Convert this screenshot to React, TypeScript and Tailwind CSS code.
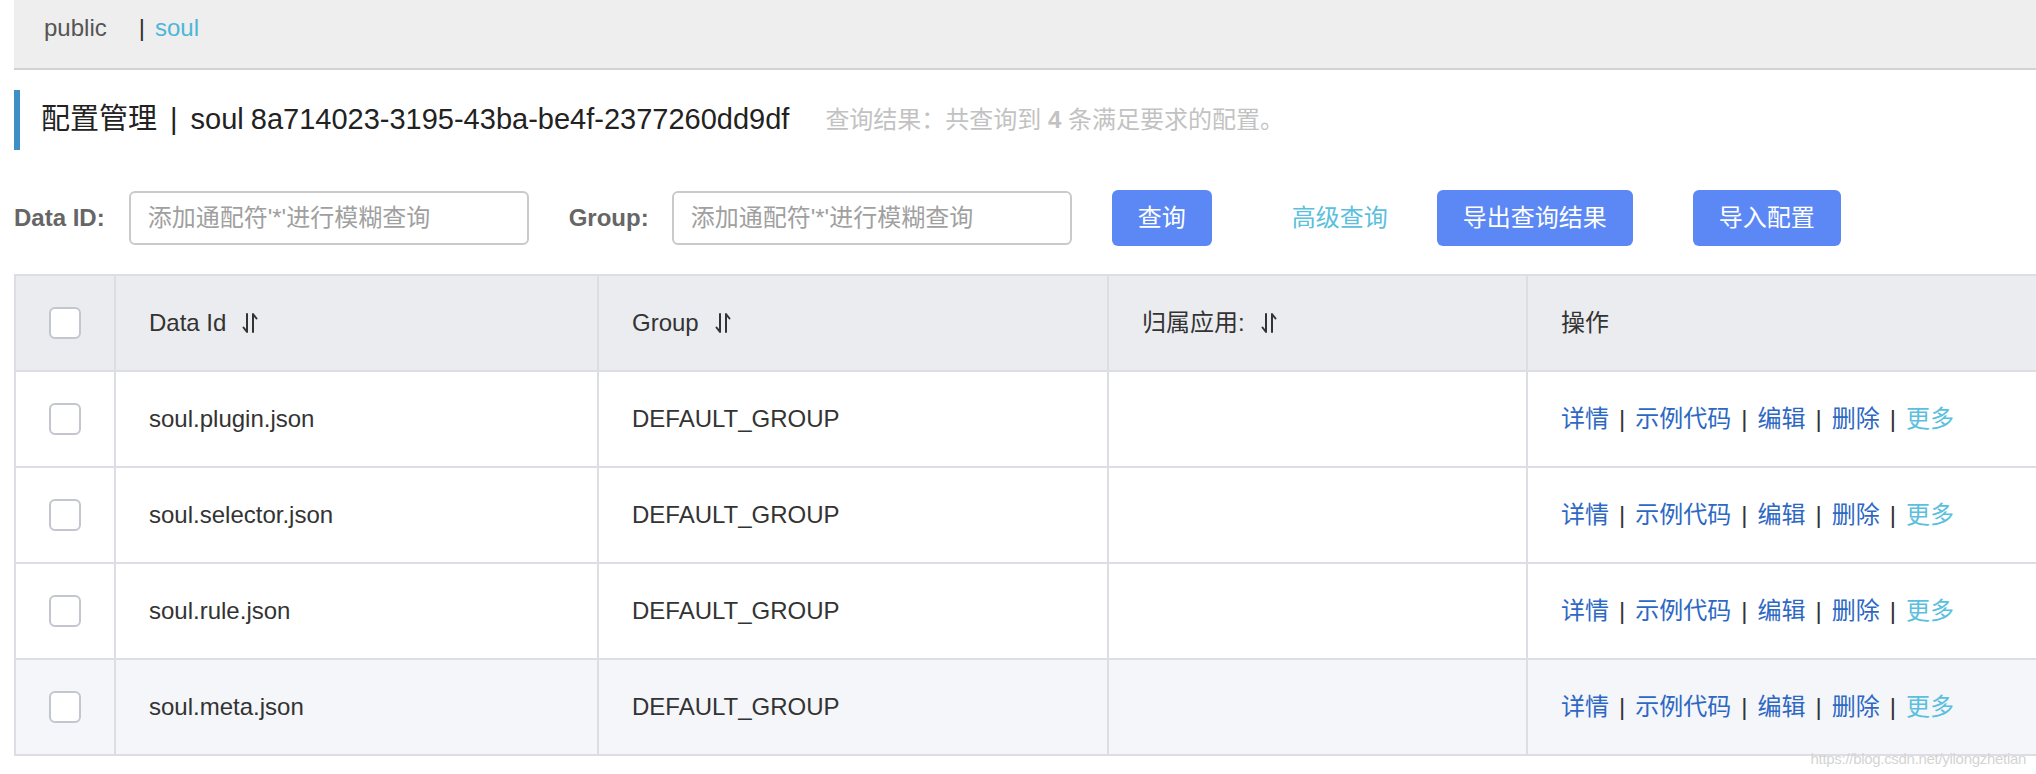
import React from "react";

const FONT = '"Liberation Sans", "Noto Sans CJK SC", Arial, sans-serif';

function SortIcon() {
  return (
    <svg width="16" height="22" viewBox="0 0 16 22" className="ml-[16px] shrink-0" fill="none" stroke="#333" strokeWidth="2" strokeLinecap="round" strokeLinejoin="round">
      <path d="M5 2 V20 L1.5 15.5" />
      <path d="M11 20 V2 L14.5 6.5" />
    </svg>
  );
}

function Checkbox() {
  return <div className="w-[32px] h-[32px] rounded-[6px] border-2 border-[#c4c6cf] bg-white" />;
}

function Sep() {
  return <span className="mx-[10px] text-[#333]">|</span>;
}

function Actions() {
  return (
    <div className="flex items-center text-[24px]">
      <span className="text-[#2d68c4]">详情</span>
      <Sep />
      <span className="text-[#2d68c4]">示例代码</span>
      <Sep />
      <span className="text-[#2d68c4]">编辑</span>
      <Sep />
      <span className="text-[#2d68c4]">删除</span>
      <Sep />
      <span className="text-[#5bbfdd]">更多</span>
    </div>
  );
}

const rows = [
  { id: "soul.plugin.json", group: "DEFAULT_GROUP", bg: "bg-white" },
  { id: "soul.selector.json", group: "DEFAULT_GROUP", bg: "bg-white" },
  { id: "soul.rule.json", group: "DEFAULT_GROUP", bg: "bg-white" },
  { id: "soul.meta.json", group: "DEFAULT_GROUP", bg: "bg-[#f5f6f9]" },
];

export default function App() {
  return (
    <div className="relative w-[2036px] h-[774px] overflow-hidden bg-white text-[#333]" style={{ fontFamily: FONT }}>
      {/* top namespace bar */}
      <div className="ml-[14px] h-[70px] bg-[#eeeeee] border-b-2 border-[#d2d2d2] flex items-center pl-[30px] pb-[12px] text-[24px]">
        <span className="text-[#555]">public</span>
        <span className="ml-[32px] text-[#333]">|</span>
        <span className="ml-[10px] text-[#4db6d8]">soul</span>
      </div>

      {/* title */}
      <div className="ml-[14px] mt-[20px] h-[60px] border-l-[6px] border-[#3d8fc5] flex items-center pl-[21px]">
        <span className="text-[29px] text-[#222]">配置管理</span>
        <span className="text-[29px] text-[#222] mx-[13px]">|</span>
        <span className="text-[29px] text-[#222]">soul</span>
        <span className="text-[29px] text-[#222] ml-[7px]">8a714023-3195-43ba-be4f-2377260dd9df</span>
        <span className="ml-[36px] text-[24px] text-[#c2c2c2]">
          查询结果：共查询到 <b className="font-bold">4</b> 条满足要求的配置。
        </span>
      </div>

      {/* search row */}
      <div className="ml-[14px] mt-[41px] h-[54px] flex items-center text-[24px]">
        <span className="font-bold text-[#666]">Data ID:</span>
        <div className="ml-[24px] w-[400px] h-[54px] rounded-[6px] border-2 border-[#cacaca] flex items-center pl-[17px] text-[#a0a0a0]">
          添加通配符'*'进行模糊查询
        </div>
        <span className="ml-[40px] font-bold text-[#666]">Group:</span>
        <div className="ml-[23px] w-[400px] h-[54px] rounded-[6px] border-2 border-[#cacaca] flex items-center pl-[17px] text-[#a0a0a0]">
          添加通配符'*'进行模糊查询
        </div>
        <div className="ml-[40px] w-[100px] h-[56px] rounded-[6px] bg-[#5c88f6] text-white flex items-center justify-center">
          查询
        </div>
        <span className="ml-[80px] text-[#5bbfdd]">高级查询</span>
        <div className="ml-[49px] w-[196px] h-[56px] rounded-[6px] bg-[#5c88f6] text-white flex items-center justify-center">
          导出查询结果
        </div>
        <div className="ml-[60px] w-[148px] h-[56px] rounded-[6px] bg-[#5c88f6] text-white flex items-center justify-center">
          导入配置
        </div>
      </div>

      {/* table */}
      <div className="ml-[14px] mt-[29px] border-t-2 border-l-2 border-[#dcdee3] text-[24px]">
        <div className="flex h-[96px] bg-[#ebecf0] border-b-2 border-[#dcdee3]">
          <div className="w-[100px] shrink-0 border-r-2 border-[#dcdee3] flex items-center justify-center">
            <Checkbox />
          </div>
          <div className="w-[483px] shrink-0 border-r-2 border-[#dcdee3] flex items-center pl-[33px]">
            <span>Data Id</span>
            <SortIcon />
          </div>
          <div className="w-[510px] shrink-0 border-r-2 border-[#dcdee3] flex items-center pl-[33px]">
            <span>Group</span>
            <SortIcon />
          </div>
          <div className="w-[419px] shrink-0 border-r-2 border-[#dcdee3] flex items-center pl-[33px]">
            <span>归属应用:</span>
            <SortIcon />
          </div>
          <div className="flex-1 flex items-center pl-[33px]">
            <span>操作</span>
          </div>
        </div>
        {rows.map((r) => (
          <div key={r.id} className={`flex h-[96px] border-b-2 border-[#dcdee3] ${r.bg}`}>
            <div className="w-[100px] shrink-0 border-r-2 border-[#dcdee3] flex items-center justify-center">
              <Checkbox />
            </div>
            <div className="w-[483px] shrink-0 border-r-2 border-[#dcdee3] flex items-center pl-[33px]">
              {r.id}
            </div>
            <div className="w-[510px] shrink-0 border-r-2 border-[#dcdee3] flex items-center pl-[33px]">
              {r.group}
            </div>
            <div className="w-[419px] shrink-0 border-r-2 border-[#dcdee3]" />
            <div className="flex-1 flex items-center pl-[33px]">
              <Actions />
            </div>
          </div>
        ))}
      </div>

      {/* watermark */}
      <div className="absolute right-[10px] bottom-[4px] text-[15px] text-[#d4d4d4] tracking-[-0.3px]">
        https://blog.csdn.net/yilongzhetian
      </div>
    </div>
  );
}
